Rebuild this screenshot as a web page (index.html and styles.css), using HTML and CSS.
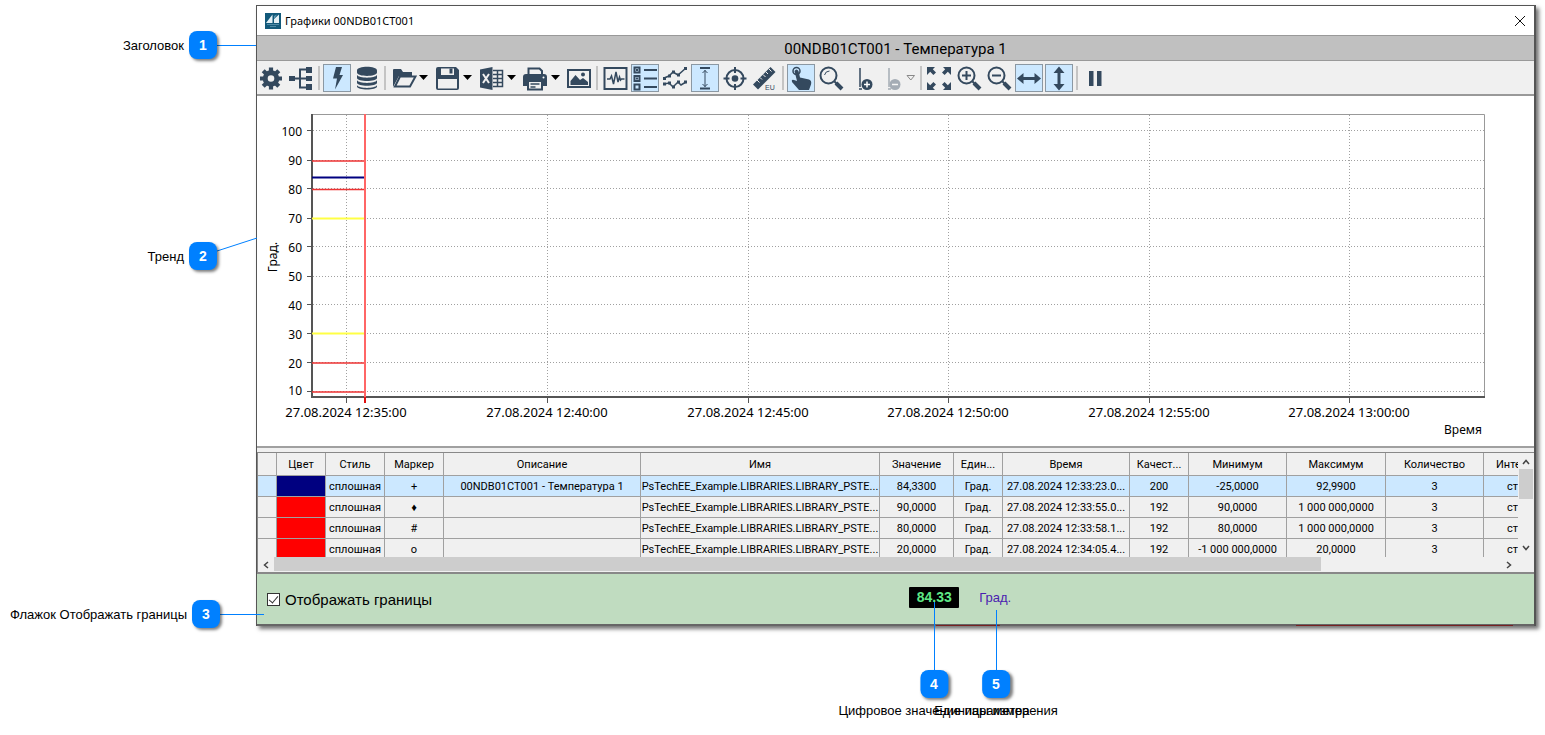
FILE: index.html
```html
<!DOCTYPE html>
<html lang="ru">
<head>
<meta charset="utf-8">
<title>Графики 00NDB01CT001</title>
<link rel="stylesheet" href="styles.css">
</head>
<body>
<div class="stage">
<main class="window">
  <header class="titlebar">
    <svg class="app-icon" viewBox="0 0 16 16"><rect width="16" height="16" fill="#12597a"/><path d="M7.500 1.500V10H1zM9 6l5-4.500V10H9z" fill="#e4f0f5"/><path d="M9 6V3l3-1.500z" fill="#5f9bb5"/><path d="M2 11.500h12M5 13.500h6" stroke="#4d8aa6"/></svg>
    <span class="title">Графики 00NDB01CT001</span>
    <button class="close" aria-label="Закрыть"><svg viewBox="0 0 12 12"><path d="M1 1l10 10M11 1L1 11"/></svg></button>
  </header>
  <h1 class="caption">00NDB01CT001 - Температура 1</h1>

  <nav class="toolbar">
    <div class="group">
      <button class="tool" aria-label="Настройки"><svg viewBox="0 0 28 28"><circle cx="14" cy="14.500" r="5.800" fill="none" stroke="#34495e" stroke-width="5"/><path d="M14 3.500v4M14 21.500v4M3 14.500h4M21 14.500h4M6.200 6.700l2.900 2.900M18.900 19.400l2.900 2.900M6.200 22.300l2.900-2.900M18.900 9.600l2.900-2.900" stroke="#34495e" stroke-width="4.200"/></svg></button>
      <button class="tool" aria-label="Структура"><svg viewBox="0 0 28 28"><path d="M2 12h6v5H2zM19 3h6v6h-6zM19 12h6v5h-6zM19 20h6v6h-6z" fill="#34495e"/><path d="M8 14.500h12M19 5.500h-6v18h6" class="ln2"/></svg></button>
    </div>
    <i class="sep"></i>
    <div class="group">
      <button class="tool on" aria-label="Реальное время"><svg viewBox="0 0 28 28"><path d="M13 3h6l-2.500 8h3.500L12 25.500l2-11h-4z" fill="#34495e"/></svg></button>
      <button class="tool" aria-label="История"><svg viewBox="0 0 28 28"><path d="M4 6.500c0-5 20-5 20 0v2c0 4.500-20 4.500-20 0zM4 11c2 3.500 18 3.500 20 0v3c0 4-20 4-20 0zM4 16.300c2 3.500 18 3.500 20 0v2.500c0 4-20 4-20 0zM4 21.300c2 3.500 18 3.500 20 0v1.200c0 4-20 4-20 0z" fill="#34495e"/></svg></button>
    </div>
    <i class="sep"></i>
    <div class="group">
      <div class="split"><button class="tool" aria-label="Открыть"><svg viewBox="0 0 28 28"><path d="M4 23V6q0-1 1-1h7l2 3h9v4H10z" fill="#34495e"/><path d="M6 22.500l5-10h15.500l-5.500 10z" class="ln2 lit"/></svg></button><button class="drop" aria-label="Меню открытия"><svg viewBox="0 0 10 6"><path d="M0 0h9L4.500 5z"/></svg></button></div>
      <div class="split"><button class="tool" aria-label="Сохранить"><svg viewBox="0 0 28 28"><path d="M5 3h18l3 3v18q0 2-2 2H5q-2 0-2-2V5q0-2 2-2z" fill="#34495e"/><path d="M8 4.500h13V11H8zM5 15h19v9.500H5z" fill="#f0f0f0"/><path d="M16.500 4.500h3v5h-3z" fill="#34495e"/></svg></button><button class="drop" aria-label="Меню сохранения"><svg viewBox="0 0 10 6"><path d="M0 0h9L4.500 5z"/></svg></button></div>
      <div class="split"><button class="tool" aria-label="Экспорт в Excel"><svg viewBox="0 0 28 28"><path d="M3 5.500L15.500 3v23L3 23.500z" fill="#34495e"/><path d="M6 10l6 9M12 10l-6 9" stroke="#f0f0f0" stroke-width="2"/><path d="M16 6.500h9.500v16H16M16 10.500h9.500M16 14.500h9.500M16 18.500h9.500M20.500 6v17" fill="none" stroke="#34495e" stroke-width="1.500"/></svg></button><button class="drop" aria-label="Меню экспорта"><svg viewBox="0 0 10 6"><path d="M0 0h9L4.500 5z"/></svg></button></div>
      <div class="split"><button class="tool" aria-label="Печать"><svg viewBox="0 0 28 28"><path d="M7.500 11V4.500h11l2.500 2.500V11" class="ln2"/><path d="M5 10h18q3 0 3 3v9H2v-9q0-3 3-3z" fill="#34495e"/><path d="M7 17h14v8.500H7z" class="ln2 lit"/><path d="M9.500 20h9M9.500 23h5" stroke="#34495e" stroke-width="1.500"/><circle cx="22.500" cy="13.500" r="1" fill="#fff"/></svg></button><button class="drop" aria-label="Меню печати"><svg viewBox="0 0 10 6"><path d="M0 0h9L4.500 5z"/></svg></button></div>
      <button class="tool" aria-label="Снимок"><svg viewBox="0 0 28 28"><rect x="3" y="6" width="22" height="17" class="ln2"/><path d="M5.500 21v-4l5-6 4.500 5 3-2 5 4v3z" fill="#34495e"/><circle cx="18" cy="10.500" r="2" fill="#34495e"/></svg></button>
    </div>
    <i class="sep"></i>
    <div class="group">
      <button class="tool" aria-label="Тренд"><svg viewBox="0 0 28 28"><rect x="3.500" y="4" width="22" height="21" class="ln2"/><path d="M6 15h3l1.500-3 2 8 2.500-12 2 10 1.500-5 1 3 1-1h3" class="ln1"/></svg></button>
      <button class="tool on" aria-label="Легенда"><svg viewBox="0 0 28 28"><path d="M3.500 3.500h5v5h-5zM3.500 12h5v5h-5zM3.500 20.500h5v5h-5z" class="ln2"/><path d="M5 6h2M5 14.500h2M13 6h13M13 14.500h13M13 23h13" class="ln2"/></svg></button>
      <button class="tool" aria-label="Графики"><svg viewBox="0 0 28 28"><path d="M3 14l5-2 4-4 5 3 8-7M3 20l5-1 4 4 5-5 3 3 5-3" class="ln1"/><path d="M2 13h3v3H2zM7 10.500h3v3H7zM11 6.500h3v3h-3zM16 9.500h3v3h-3zM23 3h3v3h-3zM2 18.500h3v3H2zM7 17.500h3v3H7zM11 21.500h3v3h-3zM16 16.500h3v3h-3zM23 16.500h3v3h-3z" fill="#34495e"/></svg></button>
      <button class="tool on" aria-label="Границы"><svg viewBox="0 0 28 28"><path d="M9 4h10M9 24.500h10" class="ln2"/><path d="M14 6v17M11.500 9L14 6.500 16.500 9M11.500 20l2.500 2.500 2.500-2.500" fill="none" stroke="#34495e"/></svg></button>
      <button class="tool" aria-label="Центр"><svg viewBox="0 0 28 28"><circle cx="14" cy="14.500" r="8.500" class="ln2"/><circle cx="14" cy="14.500" r="3.300" fill="#34495e"/><path d="M14 3v6M14 20v6M2.500 14.500h6M19.500 14.500h6" class="ln2"/></svg></button>
      <button class="tool" aria-label="Единицы"><svg viewBox="0 0 28 28"><path d="M19.500 3l5 5L7 25.500l-5-5z" fill="#34495e"/><path d="M6 16l2.500 2.500M9 13.500l2 2M12 10.500l2.500 2.500M15 8l2 2M18 5l2.500 2.500" stroke="#f0f0f0"/><text x="14" y="26" class="eu">EU</text></svg></button>
    </div>
    <i class="sep"></i>
    <div class="group">
      <button class="tool on" aria-label="Указатель"><svg viewBox="0 0 28 28"><circle cx="9.500" cy="7" r="3.500" class="ln1"/><path d="M7.500 7q2-3 4 0l1.500 6.500 9 2q3 1 2 5l-2 5.500H12L5 18q-1-3 2-2l3 1z" fill="#34495e"/></svg></button>
      <button class="tool" aria-label="Лупа"><svg viewBox="0 0 28 28"><circle cx="11.500" cy="11.500" r="8" class="ln2"/><path d="M17.500 17.500l2 2" class="ln2"/><path d="M19 19l6 6" stroke="#34495e" stroke-width="4"/><path d="M7.500 11q1-4 5-4" fill="none" stroke="#34495e"/></svg></button>
      <button class="tool" aria-label="Добавить линейку"><svg viewBox="0 0 28 28"><path d="M13 4v19" class="ln1"/><path d="M12 25h3" class="ln1"/><circle cx="20" cy="20.500" r="5.500" fill="#34495e"/><path d="M17 20.500h6M20 17.500v6" stroke="#fff" stroke-width="1.500"/></svg></button>
      <div class="split narrow"><button class="tool dim" aria-label="Удалить линейку" disabled><svg viewBox="0 0 28 28"><path d="M12 4v19" class="ln1"/><path d="M11 25h3" class="ln1"/><circle cx="18" cy="20.500" r="5.500" fill="#34495e"/><path d="M15 20.500h6" stroke="#fff" stroke-width="1.500"/></svg></button><button class="drop" aria-label="Меню линеек"><svg viewBox="0 0 10 6"><path d="M1 .5h7.500L4.800 5z" fill="none" stroke="#888"/></svg></button></div>
    </div>
    <i class="sep"></i>
    <div class="group">
      <button class="tool" aria-label="Весь график"><svg viewBox="0 0 28 28"><path d="M2 3h8L7.800 5.200l3.200 3.200L8.400 11 5.200 7.800 2 11zM26 3h-8l2.200 2.200L17 8.400l2.600 2.600 3.200-3.200L26 11zM2 26h8l-2.200-2.200 3.200-3.200L8.400 18l-3.200 3.200L2 18zM26 26h-8l2.200-2.200-3.200-3.200 2.600-2.600 3.200 3.200L26 18z" fill="#34495e"/></svg></button>
      <button class="tool" aria-label="Увеличить"><svg viewBox="0 0 28 28"><circle cx="11.500" cy="11.500" r="8" class="ln2"/><path d="M17.500 17.500l2 2" class="ln2"/><path d="M19 19l6 6" stroke="#34495e" stroke-width="4"/><path d="M7 11.500h9M11.500 7v9" class="ln2"/></svg></button>
      <button class="tool" aria-label="Уменьшить"><svg viewBox="0 0 28 28"><circle cx="11.500" cy="11.500" r="8" class="ln2"/><path d="M17.500 17.500l2 2" class="ln2"/><path d="M19 19l6 6" stroke="#34495e" stroke-width="4"/><path d="M7 11.500h9" class="ln2"/></svg></button>
      <button class="tool on" aria-label="По горизонтали"><svg viewBox="0 0 28 28"><path d="M2 14.500L8.500 9v4h11V9l6.500 5.500-6.500 5.500v-4h-11v4z" fill="#34495e"/></svg></button>
      <button class="tool on" aria-label="По вертикали"><svg viewBox="0 0 28 28"><path d="M14 2.500L8.500 9h4v11h-4l5.500 6.500 5.500-6.500h-4V9h4z" fill="#34495e"/></svg></button>
    </div>
    <i class="sep"></i>
    <button class="tool" aria-label="Пауза"><svg viewBox="0 0 28 28"><path d="M8 7h4.500v15H8zM16 7h4.500v15H16z" fill="#34495e"/></svg></button>
  </nav>

  <section class="chart">
    <svg viewBox="257 96 1277 350" class="plot">
      <g class="grid">
        <path d="M313 130.500H1484M313 160.500H1484M313 188.500H1484M313 218.500H1484M313 246.500H1484M313 276.500H1484M313 304.500H1484M313 333.500H1484M313 362.500H1484M313 391.500H1484"/>
        <path d="M346.500 115V397M547.500 115V397M748.500 115V397M948.500 115V397M1149.500 115V397M1349.500 115V397"/>
      </g>
      <path class="frame" d="M312 114.500H1484.500V398"/>
      <path class="ticks" d="M307 130.500h5M307 160.500h5M307 188.500h5M307 218.500h5M307 246.500h5M307 276.500h5M307 304.500h5M307 333.500h5M307 362.500h5M307 391.500h5M346.500 398v5M547.500 398v5M748.500 398v5M948.500 398v5M1149.500 398v5M1349.500 398v5"/>
      <path class="axis" d="M312 114V397H1485"/>
      <path class="limit-y" d="M312 218.500h53M312 333.500h53"/>
      <path class="limit-r" d="M312 161h53M312 189.500h53M312 363h53M312 392h53"/>
      <path d="M312 177.500h54" stroke="#000080" stroke-width="2"/>
      <path d="M365 114v284" stroke="#f66" stroke-width="2"/>
      <path d="M365 397v6" stroke="#e01010" stroke-width="2"/>
      <g class="ylab">
        <text x="302" y="136">100</text><text x="302" y="165">90</text><text x="302" y="194">80</text><text x="302" y="223">70</text><text x="302" y="252">60</text><text x="302" y="281">50</text><text x="302" y="310">40</text><text x="302" y="339">30</text><text x="302" y="368">20</text><text x="302" y="395">10</text>
      </g>
      <g class="xlab">
        <text x="346" y="417">27.08.2024 12:35:00</text><text x="547" y="417">27.08.2024 12:40:00</text><text x="748" y="417">27.08.2024 12:45:00</text><text x="948" y="417">27.08.2024 12:50:00</text><text x="1149" y="417">27.08.2024 12:55:00</text><text x="1349" y="417">27.08.2024 13:00:00</text>
      </g>
      <text class="name" x="1463" y="434">Время</text>
      <text class="name" transform="translate(277 257) rotate(-90)">Град.</text>
    </svg>
  </section>

  <section class="legend">
    <div class="rows">
      <table>
        <colgroup><col class="w19"><col class="w49"><col class="w59"><col class="w59"><col><col class="w239"><col class="w74"><col class="w49"><col class="w127"><col class="w59"><col class="w98"><col class="w99"><col class="w98"><col class="w34"></colgroup>
        <thead><tr><th></th><th>Цвет</th><th>Стиль</th><th>Маркер</th><th>Описание</th><th>Имя</th><th>Значение</th><th>Един...</th><th>Время</th><th>Качест...</th><th>Минимум</th><th>Максимум</th><th>Количество</th><th class="cut">Инте</th></tr></thead>
        <tbody>
        <tr class="sel"><td></td><td class="navy"></td><td>сплошная</td><td>+</td><td>00NDB01CT001 - Температура 1</td><td>PsTechEE_Example.LIBRARIES.LIBRARY_PSTE...</td><td>84,3300</td><td>Град.</td><td>27.08.2024 12:33:23.0...</td><td>200</td><td>-25,0000</td><td>92,9900</td><td>3</td><td class="cut2">ст</td></tr>
        <tr><td></td><td class="red"></td><td>сплошная</td><td>♦</td><td></td><td>PsTechEE_Example.LIBRARIES.LIBRARY_PSTE...</td><td>90,0000</td><td>Град.</td><td>27.08.2024 12:33:55.0...</td><td>192</td><td>90,0000</td><td>1 000 000,0000</td><td>3</td><td class="cut2">ст</td></tr>
        <tr><td></td><td class="red"></td><td>сплошная</td><td>#</td><td></td><td>PsTechEE_Example.LIBRARIES.LIBRARY_PSTE...</td><td>80,0000</td><td>Град.</td><td>27.08.2024 12:33:58.1...</td><td>192</td><td>80,0000</td><td>1 000 000,0000</td><td>3</td><td class="cut2">ст</td></tr>
        <tr><td></td><td class="red"></td><td>сплошная</td><td>o</td><td></td><td>PsTechEE_Example.LIBRARIES.LIBRARY_PSTE...</td><td>20,0000</td><td>Град.</td><td>27.08.2024 12:34:05.4...</td><td>192</td><td>-1 000 000,0000</td><td>20,0000</td><td>3</td><td class="cut2">ст</td></tr>
        </tbody>
      </table>
      <div class="vbar"><svg viewBox="0 0 8 6"><path d="M1 5l3-3.500L7 5"/></svg><i></i><svg viewBox="0 0 8 6"><path d="M1 1l3 3.500L7 1"/></svg></div>
    </div>
    <div class="hbar"><svg viewBox="0 0 6 8"><path d="M5 1L1.500 4 5 7"/></svg><div class="track"><i></i></div><svg viewBox="0 0 6 8"><path d="M1 1l3.500 3L1 7"/></svg></div>
  </section>

  <footer class="footer">
    <label class="check"><input type="checkbox" checked>Отображать границы</label>
    <output class="value">84.33</output>
    <span class="unit">Град.</span>
  </footer>
  <div class="edge"></div>
</main>

<svg class="leaders" viewBox="0 0 1545 735"><path d="M217 45.500H256M217 251L257 238M220 614.500H264M934.500 602V672M996.500 610V672"/></svg>
<div class="callout c1"><span>Заголовок</span><b>1</b></div>
<div class="callout c2"><span>Тренд</span><b>2</b></div>
<div class="callout c3"><span>Флажок Отображать границы</span><b>3</b></div>
<div class="callout below c4"><b>4</b><span>Цифровое значение параметра</span></div>
<div class="callout below c5"><b>5</b><span>Единицы измерения</span></div>
</div>
</body>
</html>
```
FILE: styles.css
```css
* { box-sizing: border-box; }
body { margin: 0; background: #fff; font-family: "Liberation Sans", Arial, sans-serif; color: #000; }
button { border: 0; padding: 0; background: none; }
.stage { position: relative; padding: 5px 9px 109px 256px; }

.window { display: flex; flex-direction: column; background: #f0f0f0; border: 1px solid #555; border-bottom: 0; border-right-width: 2px; box-shadow: 3px 3px 4px rgba(0,0,0,.55); }
.titlebar { display: flex; align-items: center; height: 29px; padding: 0 8px; background: #fff; }
.app-icon { width: 16px; height: 16px; }
.title { flex: 1; margin-left: 4px; font: 11px "Noto Sans", sans-serif; }
.close { display: flex; }
.close svg { width: 12px; height: 12px; fill: none; stroke: #111; }
.caption { margin: 0; height: 26px; line-height: 26px; font-family: Roboto, sans-serif; font-size: 15px; font-weight: 400; text-align: center; background: #c0c0c0; border: 1px solid #999; border-width: 1px 0; }

.toolbar { display: flex; align-items: center; height: 33px; }
.group { display: flex; gap: 2px; }
.split { display: flex; }
.tool { width: 28px; height: 28px; }
.tool svg { display: block; width: 28px; height: 28px; }
.tool.on { background: #cce8ff; box-shadow: inset 0 0 0 1px #8b98a3; }
.dim { opacity: .4; }
.ln2 { fill: none; stroke: #34495e; stroke-width: 2; }
.ln2.lit { fill: #f0f0f0; }
.ln1 { fill: none; stroke: #34495e; stroke-width: 1.5; }
.eu { font: 7px "Liberation Sans", Arial, sans-serif; fill: #34495e; }
.drop { width: 14px; display: flex; align-items: center; justify-content: center; }
.narrow .drop { width: 12px; }
.drop svg { width: 10px; height: 6px; }
.sep { width: 2px; height: 24px; margin: 0 3px; background: #c4c4c4; }

.chart { background: #fff; border-top: 2px solid #999; border-bottom: 2px solid #a0a0a0; }
.plot { display: block; width: 100%; font: 12px "Noto Sans", sans-serif; }
.grid { fill: none; stroke: #a0a0a0; stroke-dasharray: 1 2; }
.frame { fill: none; stroke: #999; }
.ticks { stroke: #555; }
.axis { fill: none; stroke: #555; stroke-width: 2; }
.limit-r { stroke: #e33; stroke-width: 1.5; }
.limit-y { stroke: #ff4; stroke-width: 2; }
.ylab { text-anchor: end; }
.xlab { text-anchor: middle; font-size: 13px; }
.name { text-anchor: middle; }

.legend { margin-top: 4px; border: 1px solid #888; border-width: 1px 0 2px 1px; font: 11px Roboto, "Noto Sans", sans-serif; }
.rows { position: relative; height: 104px; overflow: hidden; }
table { width: calc(100% - 16px); table-layout: fixed; border-collapse: separate; border-spacing: 0; }
th, td { padding: 0; font-weight: 400; text-align: center; white-space: nowrap; overflow: hidden; border: 1px solid #a0a0a0; border-width: 0 1px 1px 0; line-height: 19px; height: 21px; }
th { height: 23px; }
th:last-child, td:last-child { border-right: 0; }
th.cut { text-align: left; padding-left: 12px; }
td.cut2 { text-align: left; padding-left: 23px; }
.sel td { background-color: #cce8ff; }
td.navy, .sel td.navy { background-color: #000080; }
td.red { background-color: #f00; }
.w19 { width: 19px; } .w34 { width: 34px; } .w49 { width: 49px; } .w59 { width: 59px; } .w74 { width: 74px; }
.w98 { width: 98px; } .w99 { width: 99px; } .w127 { width: 127px; } .w239 { width: 239px; }
.vbar { position: absolute; top: 0; right: 0; bottom: 0; width: 16px; display: flex; flex-direction: column; align-items: center; padding: 6px 0; background: #f0f0f0; }
.vbar svg { width: 8px; height: 6px; }
.vbar i { width: 14px; height: 30px; margin: 4px 0 auto; background: #cdcdcd; }
.vbar svg, .hbar svg { fill: none; stroke: #444; stroke-width: 1.5; }
.hbar { display: flex; align-items: center; height: 15px; padding: 0 22px 0 5px; }
.hbar svg { width: 6px; height: 8px; }
.track { flex: 1; margin-left: 5px; height: 15px; }
.track i { display: block; width: 85%; height: 14px; background: #cdcdcd; }

.footer { display: grid; grid-template-columns: 51% auto 1fr; align-items: center; height: 50px; padding: 0 0 3px 2px; background: #c0dcc0; }
.check { display: flex; align-items: center; gap: 5px; padding: 4px 0 0 8px; font-size: 15px; }
.check input { appearance: none; position: relative; margin: 0; width: 13px; height: 13px; border: 1px solid #333; background: #fff; }
.check input:checked::after { content: ""; position: absolute; left: 3px; top: 0; width: 4px; height: 8px; border: solid #333; border-width: 0 1px 1px 0; transform: rotate(40deg); }
.value { width: 50px; height: 21px; line-height: 21px; border-radius: 1px; background: #000; color: #5fe886; font-size: 14px; font-weight: 700; text-align: center; }
.unit { padding-left: 20px; font-size: 13px; color: #4a20b0; }
.edge { height: 2px; background: #666; background-image: linear-gradient(#722 0 0), linear-gradient(#722 0 0); background-repeat: no-repeat; background-size: 5% 1px, 17% 1px; background-position: 56% 100%, 98% 100%; }

.leaders { position: absolute; left: 0; top: 0; width: 1545px; height: 735px; fill: none; stroke: #0080ff; pointer-events: none; }
.callout { position: absolute; display: flex; align-items: center; gap: 5px; font-size: 13px; white-space: nowrap; }
.callout b { width: 28px; height: 28px; border-radius: 8px; background: #0080ff; color: #fff; font-size: 14px; line-height: 28px; text-align: center; box-shadow: 2px 2px 3px rgba(0,0,0,.5); }
.below { flex-direction: column; transform: translateX(-50%); }
.c1 { right: calc(100% - 217px); top: 31px; }
.c2 { right: calc(100% - 217px); top: 242px; }
.c3 { right: calc(100% - 220px); top: 600px; }
.c4 { left: 934px; top: 670px; }
.c5 { left: 996px; top: 670px; }
```
